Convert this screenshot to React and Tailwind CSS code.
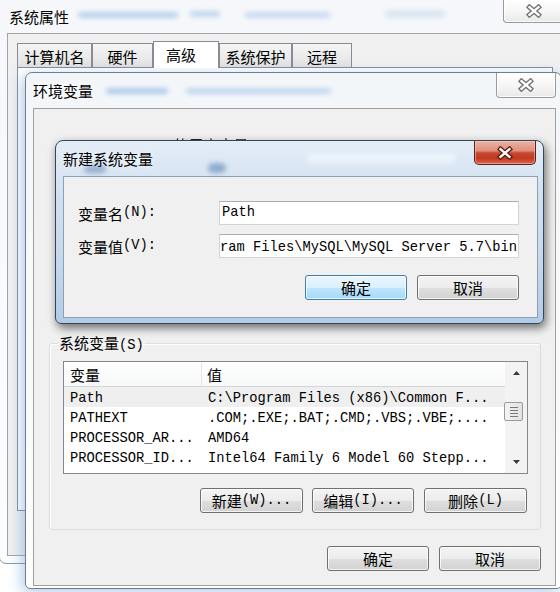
import React from "react";

function M({ children }) {
  return (
    <span className="font-['Liberation_Mono','Noto_Sans_CJK_SC',monospace] text-[13.75px]">
      {children}
    </span>
  );
}

function XGlyph({ red }) {
  return (
    <svg width="18" height="14" viewBox="0 0 18 14">
      <path
        d="M4.5 3.2 L13.5 10.8 M13.5 3.2 L4.5 10.8"
        stroke={red ? "#5a1c12" : "#707070"}
        strokeWidth="5"
        strokeLinecap="square"
        fill="none"
      />
      <path
        d="M4.5 3.2 L13.5 10.8 M13.5 3.2 L4.5 10.8"
        stroke="#ffffff"
        strokeWidth="2.4"
        strokeLinecap="square"
        fill="none"
      />
    </svg>
  );
}

function GrayClose({ className }) {
  return (
    <div
      className={`${className} flex items-center justify-center rounded-b-[4px] border border-t-0 border-[#9a9a9a] bg-[linear-gradient(to_bottom,#ffffff_0%,#f6f6f6_50%,#e9e9e9_100%)] shadow-[inset_0_0_0_1px_rgba(255,255,255,0.8)]`}
    >
      <XGlyph />
    </div>
  );
}

function Btn({ children, w, def }) {
  return (
    <div
      className={`${w} h-[25px] shrink-0 flex items-center justify-center rounded-[3px] border leading-none ${
        def
          ? "border-[#3c7fb1] bg-[linear-gradient(to_bottom,#eaf6fd_0%,#d9f0fc_50%,#bee6fd_51%,#a7d9f5_100%)]"
          : "border-[#707070] bg-[linear-gradient(to_bottom,#f4f4f4_0%,#ececec_50%,#dfdfdf_51%,#d2d2d2_100%)]"
      } shadow-[inset_0_0_0_1px_rgba(255,255,255,0.75)]`}
    >
      {children}
    </div>
  );
}

function Tab({ children, w, sel }) {
  return sel ? (
    <div
      className={`${w} h-[27px] -mb-[1px] relative z-10 flex items-center justify-center border border-b-0 border-[#898c95] bg-white`}
    >
      {children}
    </div>
  ) : (
    <div
      className={`${w} h-[24px] pt-[2px] flex items-center justify-center border border-b-0 border-[#898c95] bg-[linear-gradient(to_bottom,#f5f5f5,#e2e2e2)]`}
    >
      {children}
    </div>
  );
}

function Blob({ className }) {
  return <div className={`absolute rounded-full blur-[2.5px] ${className}`} />;
}

const rows = [
  ["Path", "C:\\Program Files (x86)\\Common F...", true],
  ["PATHEXT", ".COM;.EXE;.BAT;.CMD;.VBS;.VBE;....", false],
  ["PROCESSOR_AR...", "AMD64", false],
  ["PROCESSOR_ID...", "Intel64 Family 6 Model 60 Stepp...", false],
];

function Arrow({ up }) {
  return (
    <svg width="7" height="4" viewBox="0 0 7 4">
      <path d={up ? "M0 4 L3.5 0 L7 4Z" : "M0 0 L3.5 4 L7 0Z"} fill="#3a3a3a" />
    </svg>
  );
}

export default function App() {
  return (
    <div className="relative w-[560px] h-[592px] overflow-hidden bg-white text-black font-['Noto_Sans_CJK_SC','Noto_Sans',sans-serif] text-[15px] leading-none">
      {/* 系统属性 window */}
      <div className="absolute left-[-1px] top-[-8px] w-[660px] h-[572px] flex flex-col rounded-b-[7px] border border-[#8d9aa7] bg-[linear-gradient(to_bottom,#f5f7fa,#fcfdfe)]">
        <div className="relative h-[40px] shrink-0 flex items-center pt-[6px] pl-[9px]">
          <Blob className="left-[78px] top-[19px] w-[100px] h-[6px] bg-[#9dbfe6] opacity-70" />
          <Blob className="left-[190px] top-[18px] w-[30px] h-[6px] bg-[#9dbfe6] opacity-60" />
          <Blob className="left-[245px] top-[19px] w-[85px] h-[6px] bg-[#a7c6ea] opacity-60" />
          <Blob className="left-[385px] top-[17px] w-[60px] h-[8px] bg-[#c9d9ec] opacity-60" />
          <span className="relative [text-shadow:0_0_7px_#fff]">系统属性</span>
          <GrayClose className="absolute left-[503px] top-[7px] w-[62px] h-[23px]" />
        </div>
        <div className="ml-[7px] mb-[7px] flex-1 border border-[#a3a3a3] bg-[#f0f0f0] pl-[9px] pt-[7px]">
          <div className="flex items-end h-[26px]">
            <Tab w="w-[75px]">计算机名</Tab>
            <Tab w="w-[61px]">硬件</Tab>
            <Tab w="w-[66px]" sel>
              <span className="-ml-[10px] -mt-[2px]">高级</span>
            </Tab>
            <Tab w="w-[73px]">系统保护</Tab>
            <Tab w="w-[60px]">远程</Tab>
          </div>
          <div className="w-[536px] h-[444px] border border-[#898c95] bg-white" />
        </div>
      </div>

      {/* 环境变量 window */}
      <div className="absolute left-[25px] top-[72px] w-[537px] h-[517px] flex flex-col rounded-t-[7px] rounded-b-[5px] border border-[#707e8c] bg-[linear-gradient(to_bottom,#f3f6f9,#fdfdfe)] shadow-[-3px_3px_14px_rgba(80,140,210,0.45)]">
        <div className="relative h-[35px] shrink-0 flex items-center pl-[7px]">
          <Blob className="left-[80px] top-[15px] w-[62px] h-[6px] bg-[#8fb6e4] opacity-70" />
          <Blob className="left-[160px] top-[15px] w-[145px] h-[6px] bg-[#9fc1e8] opacity-60" />
          <span className="relative [text-shadow:0_0_7px_#fff]">环境变量</span>
          <GrayClose className="absolute left-[470px] top-0 w-[60px] h-[25px]" />
        </div>
        <div className="ml-[7px] w-[523px] h-[478px] flex flex-col border border-[#a0a0a0] bg-[#f0f0f0]">
          <div className="h-[225px] shrink-0 pl-[24px] pt-[27px]">
            <div className="leading-[18px] blur-[0.5px] text-[#222]">
              <M>Administrator </M>的用户变量<M>(U)</M>
            </div>
          </div>
          <fieldset className="ml-[15px] w-[492px] m-0 p-0 pb-[16px] border border-[#d5dfe5] rounded-[3px] shadow-[inset_1px_1px_0_#fff]">
            <legend className="ml-[8px] px-[1px] h-[18px] leading-[18px]">
              系统变量<M>(S)</M>
            </legend>
            <div className="pl-[13px] pt-[9px]">
              <div className="w-[465px] h-[113px] flex border border-[#828790] bg-white">
                <div className="w-[441px] flex flex-col">
                  <div className="h-[25px] shrink-0 flex border-b border-[#d5d5d5] bg-[linear-gradient(to_bottom,#ffffff,#f7f8f9)]">
                    <div className="w-[138px] pl-[6px] flex items-center border-r border-[#e5e5e5]">变量</div>
                    <div className="pl-[5px] flex items-center">值</div>
                  </div>
                  {rows.map(([a, b, hl]) => (
                    <div key={a} className={`h-[20px] shrink-0 flex items-center ${hl ? "bg-[#efefef]" : ""}`}>
                      <div className="w-[138px] pl-[6px] whitespace-nowrap">
                        <M>{a}</M>
                      </div>
                      <div className="pl-[6px] whitespace-nowrap">
                        <M>{b}</M>
                      </div>
                    </div>
                  ))}
                </div>
                <div className="w-[22px] flex flex-col items-center bg-[#f3f3f3]">
                  <div className="h-[22px] flex items-center justify-center">
                    <Arrow up />
                  </div>
                  <div className="mt-[18px] w-[19px] h-[19px] self-start -ml-[1px] flex flex-col items-center justify-center gap-[2px] rounded-[2px] border border-[#9a9a9a] bg-[linear-gradient(to_right,#f4f4f4,#e2e2e2)]">
                    <div className="w-[8px] h-[1px] bg-[#7a7a7a]" />
                    <div className="w-[8px] h-[1px] bg-[#7a7a7a]" />
                    <div className="w-[8px] h-[1px] bg-[#7a7a7a]" />
                    <div className="w-[8px] h-[1px] bg-[#7a7a7a]" />
                  </div>
                  <div className="flex-1" />
                  <div className="h-[22px] flex items-center justify-center">
                    <Arrow />
                  </div>
                </div>
              </div>
              <div className="mt-[14px] flex pl-[137px]">
                <Btn w="w-[103px]">
                  新建<M>(W)...</M>
                </Btn>
                <div className="ml-[9px]">
                  <Btn w="w-[102px]">
                    编辑<M>(I)...</M>
                  </Btn>
                </div>
                <div className="ml-[10px]">
                  <Btn w="w-[103px]">
                    删除<M>(L)</M>
                  </Btn>
                </div>
              </div>
            </div>
          </fieldset>
          <div className="mt-[16px] flex justify-end gap-[10px] pr-[14px]">
            <Btn w="w-[102px]">确定</Btn>
            <Btn w="w-[102px]">取消</Btn>
          </div>
        </div>
      </div>

      {/* 新建系统变量 dialog */}
      <div className="absolute left-[55px] top-[140px] w-[489px] h-[184px] flex flex-col rounded-t-[8px] rounded-b-[6px] border border-[#34465a] bg-[linear-gradient(to_bottom,#e4edf7_0%,#d4e2f1_25%,#c6d9ec_65%,#b3cbe5_100%)] shadow-[2px_4px_10px_rgba(0,0,0,0.55)]">
        <div className="relative h-[35px] shrink-0 flex items-center pl-[7px]">
          <Blob className="left-[28px] top-[23px] w-[22px] h-[9px] bg-[#6f93bd] opacity-70" />
          <Blob className="left-[152px] top-[22px] w-[18px] h-[10px] bg-[#6f93bd] opacity-70" />
          <Blob className="left-[250px] top-[12px] w-[150px] h-[10px] bg-[#eef5fc] opacity-80" />
          <span className="relative [text-shadow:0_0_7px_#fff]">新建系统变量</span>
          <div className="absolute left-[418px] top-0 w-[62px] h-[24px] flex items-center justify-center rounded-b-[5px] border border-t-0 border-[#5d2117] bg-[linear-gradient(to_bottom,#ebb3a5_0%,#df8f7c_42%,#c9472f_52%,#c13a22_75%,#da654c_100%)] shadow-[inset_0_0_0_1px_rgba(255,210,200,0.5)]">
            <XGlyph red />
          </div>
        </div>
        <div className="ml-[7px] w-[475px] h-[142px] border border-[#8ba0b7] bg-[#f0f0f0]">
          <div className="pt-[24px] pl-[14px] grid grid-cols-[141px_300px] gap-y-[9px]">
            <div className="h-[24px] flex items-center">
              变量名<M>(N):</M>
            </div>
            <div className="h-[24px] flex items-center pl-[2px] border border-[#d2d4d9] border-t-[#abadb3] bg-white">
              <M>Path</M>
            </div>
            <div className="h-[24px] flex items-center">
              变量值<M>(V):</M>
            </div>
            <div className="h-[24px] flex items-center justify-end overflow-hidden pr-[1px] border border-[#d2d4d9] border-t-[#abadb3] bg-white">
              <span className="shrink-0 whitespace-nowrap">
                <M>C:\Program Files\MySQL\MySQL Server 5.7\bin</M>
              </span>
            </div>
          </div>
          <div className="mt-[17px] flex pl-[241px] gap-[10px]">
            <Btn w="w-[102px]" def>
              确定
            </Btn>
            <Btn w="w-[102px]">取消</Btn>
          </div>
        </div>
      </div>
    </div>
  );
}
